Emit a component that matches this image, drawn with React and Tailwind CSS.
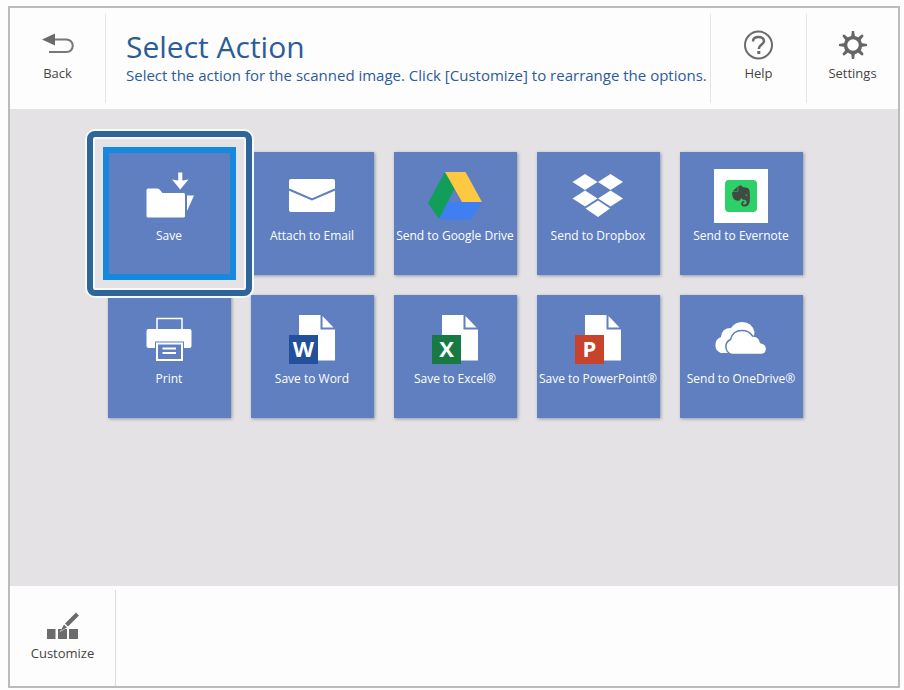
import { FaEvernote } from "react-icons/fa";

function BackIcon() {
  return (
    <svg width="32" height="32" viewBox="0 0 32 32" fill="none">
      <path d="M12 9.500H24.500A6.200 6.200 0 0 1 24.500 22H7" stroke="#777" strokeWidth="2" />
      <path d="M0 9.500L13 3.500V15.500Z" fill="#6b6b6b" />
    </svg>
  );
}

function HelpIcon() {
  return (
    <svg width="32" height="32" viewBox="0 0 32 32" fill="none" stroke="#6b6b6b">
      <circle cx="15.500" cy="15" r="13.500" strokeWidth="2" />
      <path
        d="M10 11.500C10 8.500 12.500 7 15.500 7C18.500 7 21 8.500 21 11.200C21 14.500 15.800 14.800 15.800 19"
        strokeWidth="2.500"
      />
      <path d="M15.800 21V24" strokeWidth="3" />
    </svg>
  );
}

function GearIcon() {
  const teeth = [0, 45, 90, 135, 180, 225, 270, 315];

  return (
    <svg width="32" height="32" viewBox="0 0 32 32">
      <circle cx="16" cy="15" r="7.500" fill="none" stroke="#666" strokeWidth="3.500" />
      {teeth.map((angle) => (
        <path
          key={angle}
          d="M14 7L14.900 1H17.100L18 7Z"
          fill="#666"
          transform={`rotate(${angle} 16 15)`}
        />
      ))}
    </svg>
  );
}

function CustomizeIcon() {
  return (
    <svg width="32" height="32" viewBox="0 0 32 32" fill="#6b6b6b">
      <path d="M0 19H8.500V29H0ZM11 19H20V29H11ZM22 19H31V29H22Z" />
      <path d="M13 22L16.500 14L30 1L33 5L19.500 18Z" fill="#fff" />
      <path d="M18 13.500L29 2.500L32 5.500L21 16.500ZM13.500 21L17 14.500L20 17.500Z" />
    </svg>
  );
}

function TileSvg({ children }) {
  return (
    <svg width="54" height="54" viewBox="0 0 54 54" fill="#fff">
      {children}
    </svg>
  );
}

function SaveIcon() {
  return (
    <TileSvg>
      <path d="M6 19.500H15.500Q17 19.500 18 21L20.500 24H41.500Q43 24 43 25.500V47Q43 48.500 41.500 48.500H6Q4.500 48.500 4.500 47V21Q4.500 19.500 6 19.500Z" />
      <path d="M45 26.500H52L45 42Z" />
      <path d="M36.200 3.500H40.300V11.500L46.500 10.500L38.200 20.500L30 10.500L36.200 11.500Z" />
    </TileSvg>
  );
}

function MailIcon() {
  return (
    <TileSvg>
      <rect x="4" y="10" width="46" height="33" rx="2" />
      <path d="M4 20.500L27 30.500L50 20.500" fill="none" stroke="#5f7fc0" strokeWidth="2" />
    </TileSvg>
  );
}

function DriveIcon() {
  return (
    <TileSvg>
      <path d="M17 3L27 19L11 50L0 34Z" fill="#119d5a" />
      <path d="M20 33H54L43.500 50.500H11Z" fill="#3f7ff2" />
      <path d="M17 3H37.500L54 33H34Z" fill="#fdc842" />
    </TileSvg>
  );
}

function DropboxIcon() {
  return (
    <TileSvg>
      <path d="M14 5L26.500 13L14 21L1.500 13Z" />
      <path d="M39.500 5L52 13L39.500 21L27 13Z" />
      <path d="M14 21.500L26.500 29.500L14 37.500L1.500 29.500Z" />
      <path d="M39.500 21.500L52 29.500L39.500 37.500L27 29.500Z" />
      <path d="M27 31.500L39 39.500L27 48L14.500 39.500Z" />
    </TileSvg>
  );
}

function EvernoteIcon() {
  return (
    <span className="flex size-[54px] items-center justify-center bg-white">
      <span className="flex size-8 items-center justify-center rounded-sm bg-[#2fd06a]">
        <FaEvernote className="size-6 text-[#404a42]" />
      </span>
    </span>
  );
}

function PrintIcon() {
  return (
    <TileSvg>
      <path d="M15 18V6.500H40V18" fill="none" stroke="#fff" strokeWidth="1.500" />
      <rect x="4.500" y="17" width="45" height="19" rx="2" />
      <rect x="13" y="29.500" width="29" height="20" fill="#5f7fc0" />
      <rect x="15" y="31.500" width="25" height="16.500" fill="none" stroke="#fff" strokeWidth="2" />
      <path d="M20.500 35.500H34V37.500H20.500ZM20.500 40H34V42H20.500Z" />
    </TileSvg>
  );
}

function OfficeIcon({ letter, color }) {
  return (
    <TileSvg>
      <path d="M14 3H35.500V17.500H50V48.500H14Z" />
      <path d="M37.500 4L48.500 15.500H37.500Z" />
      <rect x="4" y="23" width="29" height="29" fill={color} />
      <text
        x="18.500"
        y="45"
        textAnchor="middle"
        fontSize="22"
        fontWeight="700"
        fontFamily="Open Sans, sans-serif"
      >
        {letter}
      </text>
    </TileSvg>
  );
}

function OneDriveIcon() {
  return (
    <TileSvg>
      <path d="M7 41A8.500 8.500 0 0 1 7 25Q7.500 16 17 16Q21 10 28 10Q38 10 40.500 20L38 41Z" />
      <path
        d="M18 42.500A8 8 0 0 1 16.500 27.500Q18.500 18.500 28 18.500Q35 18.500 38.500 24Q45.500 24 46.500 30.500Q53 32 52.500 37.500Q52 42.500 47 42.500Z"
        stroke="#5f7fc0"
        strokeWidth="1.500"
      />
    </TileSvg>
  );
}

const actions = [
  { label: "Save", icon: <SaveIcon />, selected: true },
  { label: "Attach to Email", icon: <MailIcon /> },
  { label: "Send to Google Drive", icon: <DriveIcon /> },
  { label: "Send to Dropbox", icon: <DropboxIcon /> },
  { label: "Send to Evernote", icon: <EvernoteIcon /> },
  { label: "Print", icon: <PrintIcon /> },
  { label: "Save to Word", icon: <OfficeIcon letter="W" color="#22509a" /> },
  { label: "Save to Excel®", icon: <OfficeIcon letter="X" color="#187a43" /> },
  { label: "Save to PowerPoint®", icon: <OfficeIcon letter="P" color="#c7432b" /> },
  { label: "Send to OneDrive®", icon: <OneDriveIcon /> },
];

function ToolButton({ icon, label, className }) {
  return (
    <button
      type="button"
      className={`flex shrink-0 cursor-pointer flex-col items-center gap-[3px] text-[13px] leading-4 text-[#444] ${className}`}
    >
      {icon}
      {label}
    </button>
  );
}

function ActionTile({ action }) {
  return (
    <button
      type="button"
      className={`relative flex h-[123px] cursor-pointer flex-col items-center gap-[3px] bg-[#5f7fc0] pt-[17px] text-xs leading-5 whitespace-nowrap text-white ${
        action.selected ? "z-10" : "shadow-[1px_1px_3px_rgba(70,80,110,0.5)]"
      }`}
    >
      {action.icon}
      {action.label}

      {/* Selection frame */}
      {action.selected && (
        <>
          <span className="absolute -inset-[5px] border-6 border-[#1688dd]" />
          <span className="absolute -inset-[21px] rounded-lg border-6 border-[#30659a] shadow-[0_0_0_2px_#f5fafc,inset_0_0_0_2px_#f5fafc]" />
        </>
      )}
    </button>
  );
}

export default function App() {
  return (
    <div className="flex min-h-screen flex-col bg-[#fdfdfd] pt-1.5 pr-1 pb-0.5 pl-2 font-['Open_Sans',sans-serif]">
      <div className="flex flex-1 flex-col border-2 border-[#bbbbbb] bg-[#fdfdfd]">
        {/* Header */}
        <header className="flex py-1.5">
          <ToolButton icon={<BackIcon />} label="Back" className="h-[89px] w-24 border-r border-[#e6e6e6] pt-4" />

          <div className="min-w-0 flex-1 pt-[15px] pl-5 text-[#2c5c98]">
            <h1 className="text-[30px] leading-9">Select Action</h1>
            <p className="text-[15px] leading-5">
              Select the action for the scanned image. Click [Customize] to rearrange the options.
            </p>
          </div>

          <ToolButton icon={<HelpIcon />} label="Help" className="w-24 border-l border-[#e6e6e6] pt-4" />
          <ToolButton icon={<GearIcon />} label="Settings" className="w-[92px] border-l border-[#e6e6e6] pt-4" />
        </header>

        {/* Actions */}
        <main className="grid flex-1 grid-cols-[repeat(5,123px)] content-start justify-center gap-5 bg-[#e4e2e4] pt-[43px] pb-5 pl-0.5">
          {actions.map((action) => (
            <ActionTile key={action.label} action={action} />
          ))}
        </main>

        {/* Footer */}
        <footer className="flex h-[100px] pt-1">
          <ToolButton
            icon={<CustomizeIcon />}
            label="Customize"
            className="w-[106px] border-r border-[#dcdcdc] pt-5"
          />
        </footer>
      </div>
    </div>
  );
}
